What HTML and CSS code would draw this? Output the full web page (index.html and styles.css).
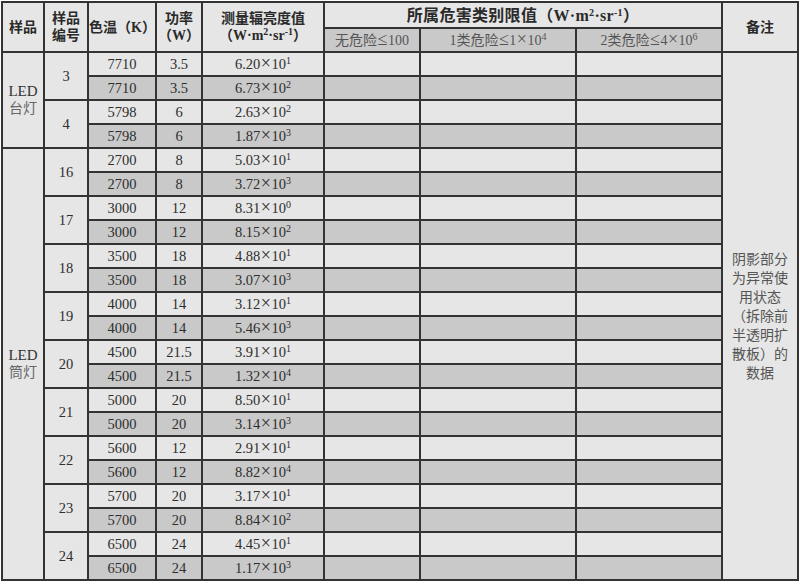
FILE: index.html
```html
<!DOCTYPE html>
<html lang="zh">
<head>
<meta charset="utf-8">
<link rel="stylesheet" href="styles.css">
</head>
<body>
<table class="grid">
  <colgroup>
    <col class="c-sample"><col class="c-no"><col class="c-temp"><col class="c-power"><col class="c-value"><col class="c-l0"><col class="c-l1"><col class="c-l2"><col class="c-note">
  </colgroup>
  <thead>
    <tr class="h1">
      <th rowspan="2">样品</th>
      <th rowspan="2">样品<br>编号</th>
      <th rowspan="2">色温（K）</th>
      <th rowspan="2">功率<br>（W）</th>
      <th rowspan="2">测量辐亮度值<br>（W·m<sup>2</sup>·sr<sup>-1</sup>）</th>
      <th colspan="3" class="big">所属危害类别限值（W·m<sup>2</sup>·sr<sup>-1</sup>）</th>
      <th rowspan="2">备注</th>
    </tr>
    <tr class="h2">
      <th class="sub">无危险<span class="x">≤</span>100</th>
      <th class="sub">1类危险<span class="x">≤</span>1<span class="x">×</span>10<sup>4</sup></th>
      <th class="sub">2类危险<span class="x">≤</span>4<span class="x">×</span>10<sup>6</sup></th>
    </tr>
  </thead>
  <tbody>
    <tr>
      <td rowspan="4" class="grp">LED<br><span class="cn">台灯</span></td>
      <td rowspan="2">3</td>
      <td>7710</td><td>3.5</td><td>6.20<span class="x">×</span>10<sup>1</sup></td><td></td><td></td><td></td>
      <td rowspan="22" class="note">阴影部分<br>为异常使<br>用状态<br>（拆除前<br>半透明扩<br>散板）的<br>数据</td>
    </tr>
    <tr class="dk"><td>7710</td><td>3.5</td><td>6.73<span class="x">×</span>10<sup>2</sup></td><td></td><td></td><td></td></tr>
    <tr><td rowspan="2">4</td><td>5798</td><td>6</td><td>2.63<span class="x">×</span>10<sup>2</sup></td><td></td><td></td><td></td></tr>
    <tr class="dk"><td>5798</td><td>6</td><td>1.87<span class="x">×</span>10<sup>3</sup></td><td></td><td></td><td></td></tr>

    <tr><td rowspan="18" class="grp">LED<br><span class="cn">筒灯</span></td><td rowspan="2">16</td><td>2700</td><td>8</td><td>5.03<span class="x">×</span>10<sup>1</sup></td><td></td><td></td><td></td></tr>
    <tr class="dk"><td>2700</td><td>8</td><td>3.72<span class="x">×</span>10<sup>3</sup></td><td></td><td></td><td></td></tr>
    <tr><td rowspan="2">17</td><td>3000</td><td>12</td><td>8.31<span class="x">×</span>10<sup>0</sup></td><td></td><td></td><td></td></tr>
    <tr class="dk"><td>3000</td><td>12</td><td>8.15<span class="x">×</span>10<sup>2</sup></td><td></td><td></td><td></td></tr>
    <tr><td rowspan="2">18</td><td>3500</td><td>18</td><td>4.88<span class="x">×</span>10<sup>1</sup></td><td></td><td></td><td></td></tr>
    <tr class="dk"><td>3500</td><td>18</td><td>3.07<span class="x">×</span>10<sup>3</sup></td><td></td><td></td><td></td></tr>
    <tr><td rowspan="2">19</td><td>4000</td><td>14</td><td>3.12<span class="x">×</span>10<sup>1</sup></td><td></td><td></td><td></td></tr>
    <tr class="dk"><td>4000</td><td>14</td><td>5.46<span class="x">×</span>10<sup>3</sup></td><td></td><td></td><td></td></tr>
    <tr><td rowspan="2">20</td><td>4500</td><td>21.5</td><td>3.91<span class="x">×</span>10<sup>1</sup></td><td></td><td></td><td></td></tr>
    <tr class="dk"><td>4500</td><td>21.5</td><td>1.32<span class="x">×</span>10<sup>4</sup></td><td></td><td></td><td></td></tr>
    <tr><td rowspan="2">21</td><td>5000</td><td>20</td><td>8.50<span class="x">×</span>10<sup>1</sup></td><td></td><td></td><td></td></tr>
    <tr class="dk"><td>5000</td><td>20</td><td>3.14<span class="x">×</span>10<sup>3</sup></td><td></td><td></td><td></td></tr>
    <tr><td rowspan="2">22</td><td>5600</td><td>12</td><td>2.91<span class="x">×</span>10<sup>1</sup></td><td></td><td></td><td></td></tr>
    <tr class="dk"><td>5600</td><td>12</td><td>8.82<span class="x">×</span>10<sup>4</sup></td><td></td><td></td><td></td></tr>
    <tr><td rowspan="2">23</td><td>5700</td><td>20</td><td>3.17<span class="x">×</span>10<sup>1</sup></td><td></td><td></td><td></td></tr>
    <tr class="dk"><td>5700</td><td>20</td><td>8.84<span class="x">×</span>10<sup>2</sup></td><td></td><td></td><td></td></tr>
    <tr><td rowspan="2">24</td><td>6500</td><td>24</td><td>4.45<span class="x">×</span>10<sup>1</sup></td><td></td><td></td><td></td></tr>
    <tr class="dk"><td>6500</td><td>24</td><td>1.17<span class="x">×</span>10<sup>3</sup></td><td></td><td></td><td></td></tr>
  </tbody>
</table>
</body>
</html>
```
FILE: styles.css
```css
html, body {
  margin: 0;
  padding: 0;
  background: #ffffff;
}
body {
  padding: 1px 0 0 1px;
  font-family: "Liberation Serif", "Noto Sans CJK SC", serif;
  color: #2e2e2e;
}
.grid {
  border-collapse: collapse;
  table-layout: fixed;
  width: 798px;
  border: 2px solid #6a6a6a;
  background: #e6e6e6;
}
.c-sample { width: 42px; }
.c-no { width: 44px; }
.c-temp { width: 68px; }
.c-power { width: 46px; }
.c-value { width: 122px; }
.c-l0 { width: 96px; }
.c-l1 { width: 156px; }
.c-l2 { width: 146px; }
.c-note { width: 76px; }

.grid th, .grid td {
  border: 2px solid #333333;
  padding: 0;
  text-align: center;
  vertical-align: middle;
  font-size: 14.5px;
  line-height: 18px;
}
.grid th {
  font-weight: bold;
  font-family: "Liberation Serif", "Noto Sans CJK SC", serif;
  color: #2a2a2a;
  font-size: 14px;
  line-height: 17px;
}
.grid thead {
  background: #e6e6e6;
}
.h1 { height: 26px; }
.h2 { height: 24px; }
.grid th.big {
  font-size: 16px;
  letter-spacing: 0.3px;
}
.grid th.sub {
  background: #c9c9c9;
  font-weight: normal;
  color: #555555;
  font-size: 14px;
}
.grid tbody tr { height: 24px; }
.grid tbody tr.dk td { background: #c9c9c9; }
.grid td.grp {
  line-height: 17px;
  font-size: 15px;
  color: #333333;
}
.grp .cn {
  color: #666666;
  font-size: 14px;
}
.grid td.note {
  color: #555555;
  font-size: 14px;
  line-height: 19px;
  background: #e6e6e6;
}
.x {
  font-size: 18px;
  line-height: 0;
  padding: 0 0.5px;
}
sup {
  font-size: 10px;
  line-height: 0;
  vertical-align: 5px;
}
```
